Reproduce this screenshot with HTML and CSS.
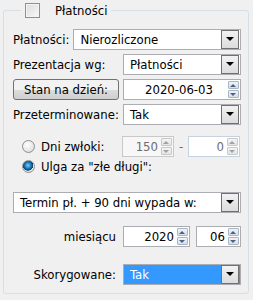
FILE: index.html
```html
<!DOCTYPE html>
<html lang="pl">
<head>
    <meta charset="UTF-8">
    <title>Płatności</title>
    <link rel="stylesheet" href="styles.css">
</head>
<body>
    <fieldset class="group">
        <legend class="group-title">
            <span class="check"></span>
            <span>Płatności</span>
        </legend>

        <div class="row">
            <span class="label short">Płatności:</span>
            <div class="combo grow"><span class="value">Nierozliczone</span><span class="drop"></span></div>
        </div>

        <div class="row">
            <span class="label">Prezentacja wg:</span>
            <div class="combo grow"><span class="value">Płatności</span><span class="drop"></span></div>
        </div>

        <div class="row">
            <button class="btn">Stan na dzień:</button>
            <div class="spin grow center"><span class="value">2020-06-03</span><span class="arrows"><i class="up"></i><i class="down"></i></span></div>
        </div>

        <div class="row gap-after">
            <span class="label">Przeterminowane:</span>
            <div class="combo grow"><span class="value">Tak</span><span class="drop"></span></div>
        </div>

        <div class="row radio-row tight">
            <span class="radio"></span>
            <span class="label inner">Dni zwłoki:</span>
            <div class="spin disabled small"><span class="value right">150</span><span class="arrows"><i class="up"></i><i class="down"></i></span></div>
            <span class="dash">-</span>
            <div class="spin disabled small light"><span class="value right">0</span><span class="arrows"><i class="up"></i><i class="down"></i></span></div>
        </div>

        <div class="row radio-row short-row widest-gap">
            <span class="radio on"></span>
            <span class="label">Ulga za "złe długi":</span>
        </div>

        <div class="row wide-gap">
            <div class="combo grow"><span class="value">Termin pł. + 90 dni wypada w:</span><span class="drop"></span></div>
        </div>

        <div class="row widest-gap">
            <span class="label right-label">miesiącu</span>
            <div class="spin year"><span class="value right">2020</span><span class="arrows"><i class="up"></i><i class="down"></i></span></div>
            <div class="spin month"><span class="value right">06</span><span class="arrows"><i class="up"></i><i class="down"></i></span></div>
        </div>

        <div class="row last">
            <span class="label right-label">Skorygowane:</span>
            <div class="combo grow selected"><span class="value">Tak</span><span class="drop"></span></div>
        </div>
    </fieldset>
</body>
</html>
```

FILE: styles.css
```css
body {
    margin: 0;
    padding: 0;
    background-color: #f0f0f0;
    font-family: "DejaVu Sans Condensed", "DejaVu Sans", Tahoma, sans-serif;
    font-size: 13px;
    color: #000;
}

.group {
    margin: 3px 3px 0 3px;
    padding: 11px 7px 8px 9px;
    border: 1px solid #d5dfe5;
    border-radius: 3px;
    width: 228px;
}

.group-title {
    display: flex;
    align-items: center;
    gap: 15px;
    margin-left: 8px;
    padding: 0 4px;
}

.check {
    width: 13px;
    height: 13px;
    border: 1px solid #8e8f8f;
    background: linear-gradient(135deg, #dcdcdc, #f8f8f8);
    box-shadow: inset 0 0 0 1px #f4f4f4;
}

.row {
    display: flex;
    align-items: center;
    height: 21px;
    margin-bottom: 4px;
}

.row.gap-after {
    margin-bottom: 11px;
}

.row.tight {
    margin-bottom: 0;
}

.row.short-row {
    height: 18px;
}

.row.wide-gap {
    margin-bottom: 13px;
}

.row.widest-gap {
    margin-bottom: 17px;
}

.row.last {
    margin-bottom: 0;
}

.label {
    width: 110px;
    white-space: nowrap;
}

.label.short {
    width: auto;
    margin-right: 4px;
}

.label.inner {
    width: 81px;
}

.right-label {
    text-align: right;
    padding-right: 7px;
    width: 103px;
}

.grow {
    flex: 1;
}

.combo,
.spin {
    display: flex;
    align-items: center;
    height: 19px;
    border: 1px solid #abadb3;
    background: #fff;
    box-sizing: content-box;
}

.value {
    flex: 1;
    padding-left: 6px;
    white-space: nowrap;
    overflow: hidden;
}

.value.right {
    text-align: right;
    padding-right: 3px;
}

.center .value {
    text-align: center;
}

.drop {
    width: 16px;
    height: 17px;
    margin-right: 1px;
    border: 1px solid #707070;
    background: linear-gradient(#f2f2f2, #dcdcdc);
    position: relative;
}

.drop::after {
    content: '';
    position: absolute;
    left: 4px;
    top: 6px;
    border-left: 4px solid transparent;
    border-right: 4px solid transparent;
    border-top: 4px solid #000;
}

.selected {
    background: #3399ff;
    color: #fff;
}

.arrows {
    display: flex;
    flex-direction: column;
    width: 11px;
    height: 17px;
    margin-right: 1px;
    gap: 1px;
}

.arrows i {
    flex: 1;
    position: relative;
    border: 1px solid #a9b6c4;
    background: linear-gradient(#eef3f8, #d6e0ea);
    border-radius: 1px;
}

.arrows i::after {
    content: '';
    position: absolute;
    left: 1px;
    border-left: 3px solid transparent;
    border-right: 3px solid transparent;
}

.arrows .up::after {
    top: 2px;
    border-bottom: 3px solid #4d6185;
}

.arrows .down::after {
    top: 2px;
    border-top: 3px solid #4d6185;
}

.disabled {
    border-color: #c9c9c9;
    background: #f7f7f7;
    color: #6d6d6d;
}

.disabled.light {
    background: #fff;
    border-color: #c5d3e0;
}

.disabled .arrows i {
    border-color: #c9c9c9;
    background: linear-gradient(#f4f4f4, #e4e4e4);
}

.disabled .arrows i::after {
    border-bottom-color: #9da3aa;
    border-top-color: #9da3aa;
}

.small {
    width: 50px;
}

.dash {
    width: 14px;
    text-align: center;
    color: #6d6d6d;
}

.year {
    width: 65px;
}

.month {
    width: 43px;
    margin-left: 6px;
}

.radio-row {
    padding-left: 9px;
}

.radio {
    width: 13px;
    height: 13px;
    border-radius: 50%;
    border: 1px solid #8f8f8f;
    background: radial-gradient(circle at 40% 35%, #ffffff, #d4d4d4);
    margin-right: 6px;
    box-sizing: border-box;
}

.radio.on {
    background: radial-gradient(circle at 45% 40%, #7fd0f5 0, #1d7bbf 3px, #0b3d73 5px, #eeeeee 5.5px, #d4d4d4 7px);
}

.btn {
    width: 106px;
    height: 21px;
    margin-right: 4px;
    font-family: inherit;
    font-size: 13px;
    border: 1px solid #707070;
    border-radius: 3px;
    background: linear-gradient(#f2f2f2 50%, #dddddd 50%, #cfcfcf);
    padding: 0;
}
```
